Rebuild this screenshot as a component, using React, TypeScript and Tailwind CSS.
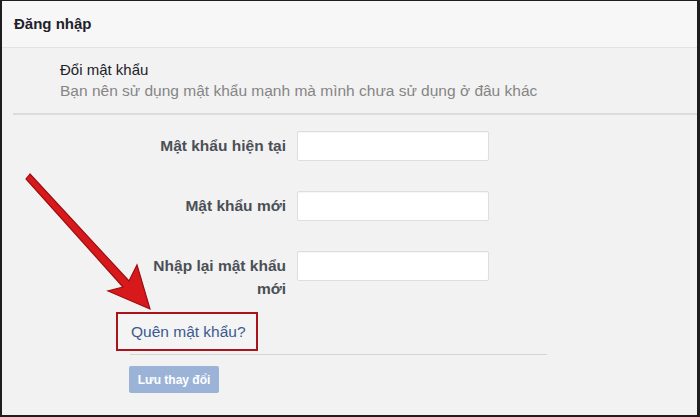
export default function App() {
  const rows = [
    { label: "Mật khẩu hiện tại" },
    { label: "Mật khẩu mới" },
    { label: "Nhập lại mật khẩu mới" },
  ];

  return (
    <div className="relative w-[700px] h-[417px] bg-[#1e1e1e] pt-[1px] pl-[2px] pr-[3px] pb-[2px] font-['Liberation_Sans',Arial,sans-serif] overflow-hidden">
      <div className="flex flex-col h-full bg-[#f2f2f2]">
        {/* Header */}
        <div className="h-[47px] shrink-0 flex items-center pl-[12px] bg-[#f7f7f8] border-b border-[#e3e3e3]">
          <span className="text-[15px] font-bold text-[#1d2129]">Đăng nhập</span>
        </div>

        {/* Title */}
        <div className="pl-[58px] pt-[12px]">
          <p className="text-[15px] leading-[20px] text-[#1d2129]">Đổi mật khẩu</p>
          <p className="text-[15.5px] leading-[21px] text-[#858585]">
            Bạn nên sử dụng mật khẩu mạnh mà mình chưa sử dụng ở đâu khác
          </p>
        </div>
        <div className="ml-[11px] mt-[12px] h-[2px] bg-[#dcdcdc]" />

        {/* Form */}
        <div className="flex flex-col gap-[30px] pt-[16px]">
          {rows.map((row, i) => (
            <div key={i} className="flex items-start gap-[11px]">
              <div className="w-[150px] ml-[134px] text-right text-[15.5px] leading-[23px] font-bold text-[#4b4f56] pt-[3px]">
                {row.label}
              </div>
              <input
                type="password"
                className="w-[192px] h-[30px] bg-white border border-[#dcdee2] rounded-[2px] shadow-[inset_0_1px_1px_rgba(0,0,0,0.04)]"
              />
            </div>
          ))}
        </div>

        {/* Forgot password */}
        <div className="ml-[114px] mt-[12px] w-[142px] h-[39px] border-2 border-[#a8141c] bg-[#f4f4f4] flex items-center pl-[13px]">
          <a className="text-[15.5px] text-[#3b5a8f]">Quên mật khẩu?</a>
        </div>
        <div className="ml-[128px] w-[417px] mt-[3px] h-[1px] bg-[#d4d4d4]" />
        <div className="ml-[127px] mt-[11px]">
          <button className="w-[90px] h-[27px] rounded-[2px] bg-[#9cb3d8] text-white text-[12px] font-bold">
            Lưu thay đổi
          </button>
        </div>
      </div>

      {/* Red arrow annotation */}
      <svg className="absolute left-0 top-0 pointer-events-none" width="700" height="417" viewBox="0 0 700 417">
        <polygon
          points="30,174 26,179 123,287 108,291 150,309 137,265 129,281"
          fill="#d8191c"
          stroke="#9b0d10"
          strokeWidth="1.2"
          strokeLinejoin="miter"
        />
      </svg>
    </div>
  );
}
